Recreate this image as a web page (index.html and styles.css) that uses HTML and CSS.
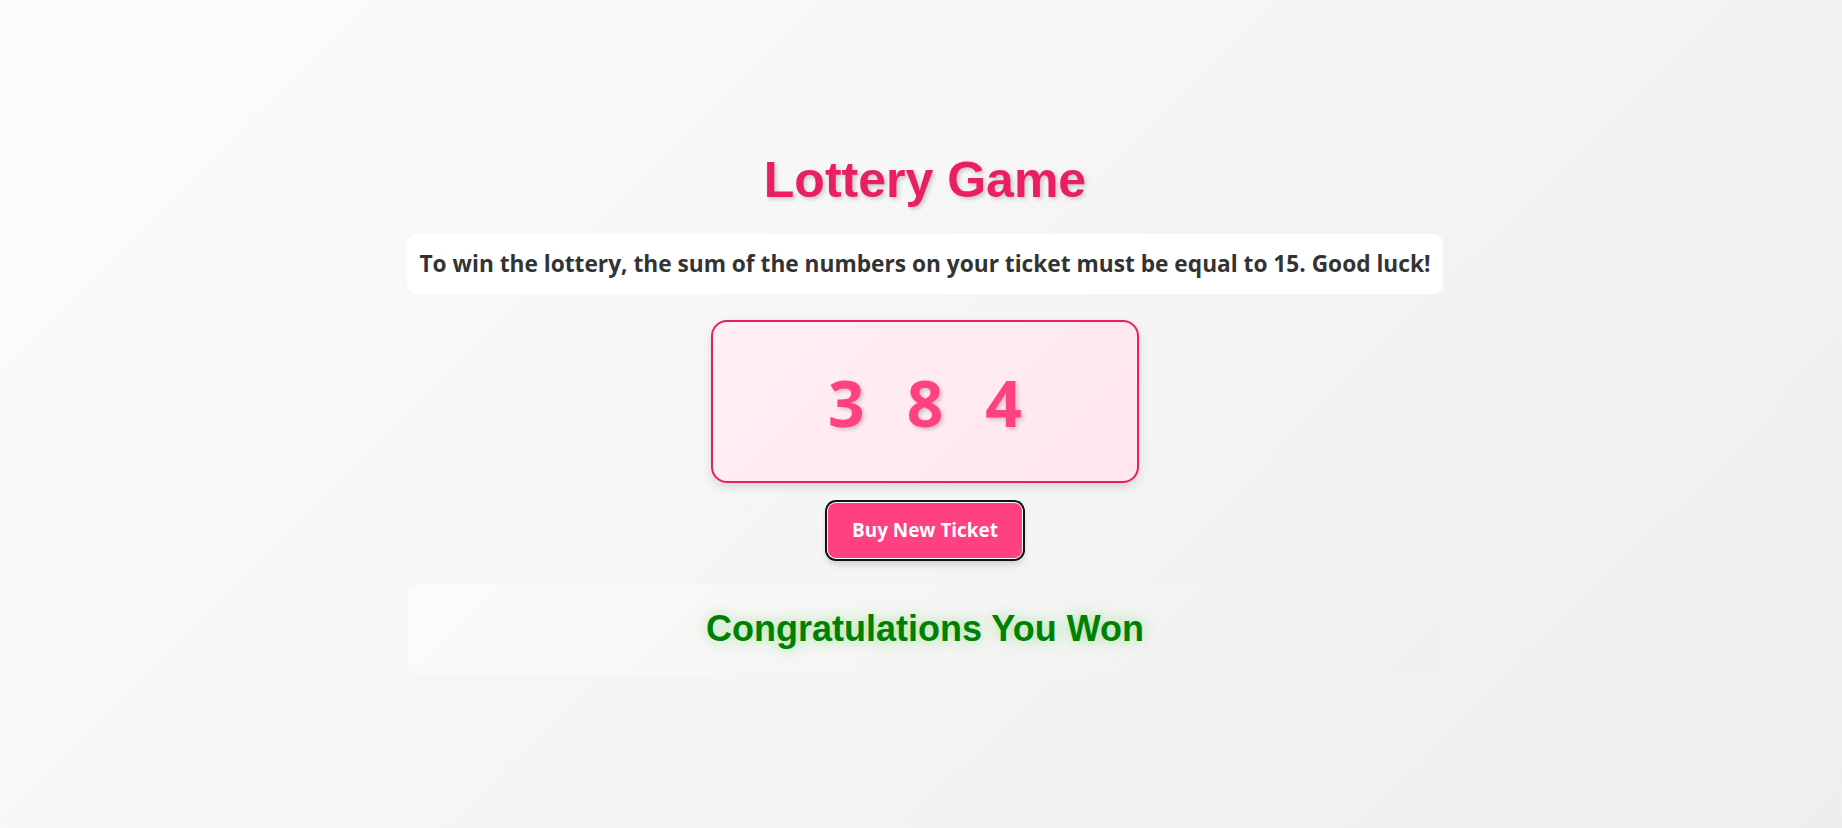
FILE: index.html
```html
<!DOCTYPE html>
<html lang="en">
<head>
<meta charset="utf-8">
<title>Lottery Game</title>
<link rel="stylesheet" href="styles.css">
</head>
<body>
<main class="game">
  <h1 class="title">Lottery Game</h1>
  <p class="rules">To win the lottery, the sum of the numbers on your ticket must be equal to 15. Good luck!</p>
  <div class="ticket">
    <span class="digit">3</span>
    <span class="digit">8</span>
    <span class="digit">4</span>
  </div>
  <button class="buy" type="button">Buy New Ticket</button>
  <div class="result">
    <h2 class="result-text">Congratulations You Won</h2>
  </div>
</main>
</body>
</html>
```

FILE: styles.css
```css
html, body {
  margin: 0;
  padding: 0;
}
body {
  min-height: 100vh;
  background: linear-gradient(135deg, #fdfcfc 0%, #eeeeee 100%);
  font-family: "Open Sans", "Noto Sans", sans-serif;
}
.game {
  display: flex;
  flex-direction: column;
  align-items: center;
  padding: 152px 0 0 8px;
}
.title {
  margin: 0 0 24px;
  font-family: "Liberation Sans", Arial, sans-serif;
  font-size: 50px;
  line-height: 1.15;
  font-weight: 700;
  color: #e91e63;
  text-shadow: 2px 2px 4px rgba(0, 0, 0, 0.2);
}
.rules {
  box-sizing: border-box;
  width: 1036px;
  margin: 0 0 26px;
  padding: 14px 10px;
  background: #ffffff;
  border-radius: 10px;
  text-align: center;
  font-size: 22.7px;
  line-height: 32px;
  font-weight: 700;
  color: #333333;
}
.ticket {
  box-sizing: border-box;
  width: 428px;
  height: 163px;
  margin: 0 0 20px;
  padding-top: 2px;
  display: flex;
  justify-content: center;
  align-items: center;
  gap: 42px;
  border: 2px solid #e91e63;
  border-radius: 16px;
  background: linear-gradient(135deg, #fff0f5 0%, #ffe6ec 100%);
  box-shadow: 0 4px 10px rgba(0, 0, 0, 0.12);
}
.digit {
  font-size: 64px;
  font-weight: 700;
  color: #ff4081;
  text-shadow: 2px 2px 4px rgba(0, 0, 0, 0.2);
}
.buy {
  box-sizing: border-box;
  width: 194px;
  height: 55px;
  margin: 0 0 26px;
  border: none;
  border-radius: 8px;
  background: #ff4081;
  color: #ffffff;
  font-family: "Open Sans", "Noto Sans", sans-serif;
  font-size: 18.9px;
  font-weight: 700;
  box-shadow: 0 0 0 1px #ffffff, 0 0 0 3px #111111, 0 5px 8px rgba(0, 0, 0, 0.2);
  cursor: pointer;
}
.result {
  box-sizing: border-box;
  width: 1036px;
  height: 91px;
  display: flex;
  justify-content: center;
  align-items: center;
  border-radius: 10px;
  background: linear-gradient(135deg, #fcfafa 0%, #f0f0f0 100%);
}
.result-text {
  margin: 0;
  font-family: "Liberation Sans", Arial, sans-serif;
  font-size: 36px;
  line-height: 1.15;
  font-weight: 700;
  color: #008000;
  text-shadow: 0 0 16px rgba(0, 200, 0, 0.4);
}
```
